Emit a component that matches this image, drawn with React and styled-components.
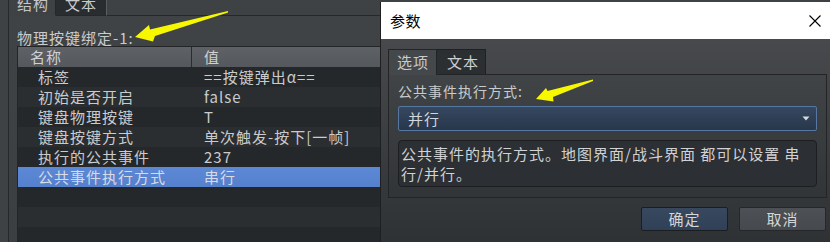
import React from 'react';
import styled, { createGlobalStyle } from 'styled-components';

const Global = createGlobalStyle`
  html, body { margin: 0; padding: 0; background: #3f4245; }
  body { font-family: "Noto Sans CJK SC", "Noto Sans", sans-serif; }
`;

const Screen = styled.div`
  position: relative;
  width: 830px;
  height: 242px;
  overflow: hidden;
  box-sizing: border-box;
  background: #3f4245;
  display: flex;
  padding-left: 8px;
`;

const Window = styled.div`
  flex: 1;
  min-width: 0;
  border-left: 1px solid #26282b;
  display: flex;
  flex-direction: column;
`;

const TabBar = styled.div`
  display: flex;
  height: 16px;
  flex-shrink: 0;
`;

const TabFill = styled.div`
  flex: 1;
  border-bottom: 1px solid #25272a;
`;

const Tab = styled.div`
  box-sizing: border-box;
  width: ${p => p.$w}px;
  height: 16px;
  overflow: hidden;
  display: flex;
  align-items: flex-end;
  padding-left: ${p => p.$pad}px;
  background: ${p => (p.$active ? '#3f4245' : '#2a2d30')};
  border-right: 1px solid ${p => (p.$active ? '#25272a' : '#5a5d61')};
  border-bottom: 1px solid ${p => (p.$active ? 'transparent' : '#25272a')};
  color: ${p => (p.$active ? '#c4c6c8' : '#c8cacc')};
  font-size: 15px;
  letter-spacing: 1px;
  span { line-height: 17px; margin-bottom: 3px; }
`;

const Pane = styled.div`
  flex: 1;
  min-height: 0;
  display: flex;
  flex-direction: column;
  padding: 13px 0 0 8px;
  background: linear-gradient(#404346, #3c3f42);
`;

const Caption = styled.div`
  font-size: 15px;
  letter-spacing: 1px;
  line-height: 17px;
  color: #c9cbcd;
`;

const Table = styled.div`
  flex: 1;
  border-top: 1px solid #232527;
  border-left: 1px solid #232527;
  display: flex;
  flex-direction: column;
  overflow: hidden;
`;

const Head = styled.div`
  display: grid;
  grid-template-columns: 174px 1fr;
  height: 20px;
  flex-shrink: 0;
  background: linear-gradient(#5e6266, #54585c);
`;

const HeadCell = styled.div`
  box-sizing: border-box;
  padding-left: 12px;
  font-size: 15px;
  letter-spacing: 1px;
  line-height: 20px;
  color: #cfd1d3;
  border-right: ${p => (p.$divider ? '1px solid #2a2c2f' : 'none')};
`;

const Row = styled.div`
  display: grid;
  grid-template-columns: 174px 1fr;
  height: 20px;
  flex-shrink: 0;
  background: ${p => (p.$selected ? 'linear-gradient(#5d88d6, #5580cc)' : p.$alt ? '#2b2e31' : '#25282b')};
  color: ${p => (p.$selected ? '#d6dbe6' : '#c9cbcd')};
  font-size: 15px;
  letter-spacing: 1px;
  line-height: 20px;
  white-space: nowrap;
`;

const NameCell = styled.div`
  padding-left: 20px;
`;

const ValueCell = styled.div`
  padding-left: 12px;
`;

const Dialog = styled.div`
  position: absolute;
  left: 380px;
  top: 2px;
  width: 452px;
  height: 240px;
  display: flex;
  flex-direction: column;
  border-left: 1px solid #1d1f21;
  box-sizing: border-box;
`;

const TitleBar = styled.div`
  height: 37px;
  flex-shrink: 0;
  background: #ffffff;
  display: flex;
  align-items: center;
  justify-content: space-between;
  padding: 0 11px 0 9px;
`;

const Title = styled.div`
  font-size: 15px;
  color: #000;
  letter-spacing: 0.5px;
`;

const Body = styled.div`
  flex: 1;
  display: flex;
  flex-direction: column;
  padding: 9px 5px 0 7px;
  background: linear-gradient(#47494c, #2f3235);
`;

const DTabBar = styled.div`
  display: flex;
  align-items: flex-end;
  height: 26px;
`;

const DTab = styled.div`
  box-sizing: border-box;
  width: 49px;
  height: ${p => (p.$active ? 26 : 25)}px;
  padding-left: ${p => (p.$active ? 8 : 10)}px;
  font-size: 15px;
  letter-spacing: 1px;
  line-height: 24px;
  color: ${p => (p.$active ? '#c8cacc' : '#cdd0d2')};
  background: ${p => (p.$active ? '#45484b' : '#2c2f32')};
  border: 1px solid ${p => (p.$active ? '#222426' : '#1e2022')};
  border-bottom: none;
  border-left: ${p => (p.$active ? '1px solid #222426' : 'none')};
  margin-bottom: ${p => (p.$active ? -1 : 0)}px;
  position: relative;
`;

const DPane = styled.div`
  border: 1px solid #222426;
  background: linear-gradient(#414447, #323538);
  padding: 8px 9px 10px 9px;
  display: flex;
  flex-direction: column;
`;

const Label = styled.div`
  font-size: 14px;
  letter-spacing: 1px;
  line-height: 17px;
  color: #c9cbcd;
`;

const Combo = styled.div`
  margin-top: 6px;
  height: 25px;
  box-sizing: border-box;
  border: 1px solid #5677a2;
  border-radius: 2px;
  background: linear-gradient(#36485f, #27374c);
  display: flex;
  align-items: center;
  justify-content: space-between;
  padding: 0 6px 0 9px;
  font-size: 15px;
  letter-spacing: 1px;
  color: #d3d6da;
`;

const Desc = styled.div`
  margin-top: 9px;
  height: 47px;
  box-sizing: border-box;
  border: 1px solid #1c1e21;
  border-radius: 4px;
  background: #2c2f33;
  padding: 3px 2px;
  font-size: 15px;
  letter-spacing: 1px;
  line-height: 20px;
  color: #d0d2d4;
  white-space: nowrap;
`;

const Buttons = styled.div`
  display: flex;
  justify-content: flex-end;
  gap: 11px;
  margin-top: 9px;
  padding-right: 1px;
`;

const Button = styled.div`
  width: 87px;
  height: 24px;
  box-sizing: border-box;
  border: 1px solid ${p => (p.$primary ? '#1b1d20' : '#25272a')};
  border-radius: 2px;
  background: ${p => (p.$primary ? 'linear-gradient(#38495f, #2f4057)' : 'linear-gradient(#4d5054, #46494d)')};
  color: #d4d6d8;
  font-size: 15px;
  letter-spacing: 1px;
  line-height: 22px;
  text-align: center;
`;

const Overlay = styled.svg`
  position: absolute;
  left: 0;
  top: 0;
  width: 830px;
  height: 242px;
  pointer-events: none;
`;

const rows = [
  ['标签', '==按键弹出α=='],
  ['初始是否开启', 'false'],
  ['键盘物理按键', 'T'],
  ['键盘按键方式', '单次触发-按下[一帧]'],
  ['执行的公共事件', '237'],
  ['公共事件执行方式', '串行'],
  ['', ''],
  ['', ''],
  ['', ''],
];

export default function App() {
  return (
    <>
      <Global />
      <Screen>
        <Window>
          <TabBar>
            <Tab $active $w={47} $pad={8}><span>结构</span></Tab>
            <Tab $w={51} $pad={9}><span>文本</span></Tab>
            <TabFill />
          </TabBar>
          <Pane>
            <Caption>物理按键绑定-1:</Caption>
            <Table>
              <Head>
                <HeadCell $divider>名称</HeadCell>
                <HeadCell>值</HeadCell>
              </Head>
              {rows.map(([n, v], i) => (
                <Row key={i} $alt={i % 2 === 1} $selected={i === 5}>
                  <NameCell>{n}</NameCell>
                  <ValueCell>{v}</ValueCell>
                </Row>
              ))}
            </Table>
          </Pane>
        </Window>

        <Dialog>
          <TitleBar>
            <Title>参数</Title>
            <svg width="12" height="12" viewBox="0 0 12 12">
              <path d="M0.5 0.5 L11.5 11.5 M11.5 0.5 L0.5 11.5" stroke="#000" strokeWidth="1.1" fill="none" />
            </svg>
          </TitleBar>
          <Body>
            <DTabBar>
              <DTab $active>选项</DTab>
              <DTab>文本</DTab>
            </DTabBar>
            <DPane>
              <Label>公共事件执行方式:</Label>
              <Combo>
                <span>并行</span>
                <svg width="8" height="5" viewBox="0 0 8 5">
                  <path d="M0.5 0.5 L7.5 0.5 L4 4.5 Z" fill="#d8dadc" />
                </svg>
              </Combo>
              <Desc>
                公共事件的执行方式。地图界面/战斗界面 都可以设置 串<br />行/并行。
              </Desc>
            </DPane>
            <Buttons>
              <Button $primary>确定</Button>
              <Button>取消</Button>
            </Buttons>
          </Body>
        </Dialog>

        <Overlay viewBox="0 0 830 242">
          <polygon points="135,37 149,25 150,29.5 228,11 228,12.5 155,36 153,41.5" fill="#f7f700" />
          <polygon points="536,99 546,88 547.5,91 593,79.5 593,81 553,97 553.5,101.5" fill="#f7f700" />
        </Overlay>
      </Screen>
    </>
  );
}
